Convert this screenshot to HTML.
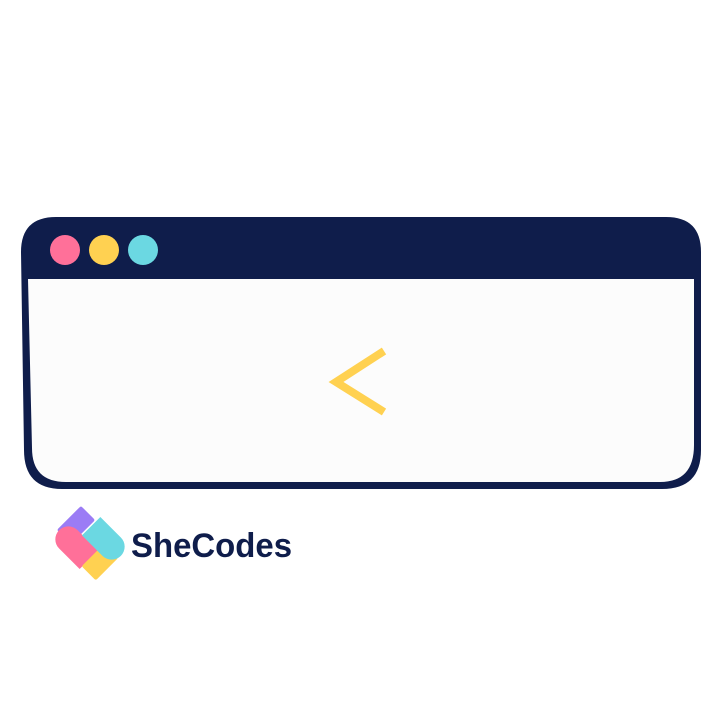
<!DOCTYPE html>
<html><head><style>
body{margin:0;width:720px;height:720px;background:#fff;overflow:hidden;position:relative;font-family:"Liberation Sans",sans-serif}
</style></head><body>
<svg width="720" height="720" style="position:absolute;left:0;top:0">
<path d="M56 217 L666 217 Q701 217 701 252 L701 450 Q701 489 662 489 L62 489 Q24 489 24 450 L21 252 Q21 217 56 217 Z" fill="#0f1d4b"/>
<path d="M28 279 L694 279 L694 445 Q694 482 660 482 L66 482 Q32 482 32 448 Z" fill="#fcfcfc"/>
<circle cx="65" cy="250" r="15" fill="#ff7099"/>
<circle cx="104" cy="250" r="15" fill="#ffd151"/>
<circle cx="143" cy="250" r="15" fill="#6bd8e2"/>
<polyline points="384,351 336,382 384,412" fill="none" stroke="#ffd151" stroke-width="8"/>
<rect x="-17" y="-10" width="34" height="20" rx="2" fill="#9b7cf5" transform="translate(76 525) rotate(-45)"/>
<path d="M-8 -13 L21 -13 L21 13 L-8 13 A13 13 0 0 1 -8 -13 Z" fill="#ff7099" transform="translate(74 545) rotate(45)"/>
<rect x="-16" y="-10" width="32" height="20" rx="2" fill="#ffd151" transform="translate(100 562) rotate(-45)"/>
<path d="M-21 -13 L8 -13 A13 13 0 0 1 8 13 L-21 13 Z" fill="#6bd8e2" transform="translate(106 541) rotate(45)"/>
<text x="131" y="557" font-family="Liberation Sans" font-weight="bold" font-size="34" fill="#0f1d4b" textLength="161" lengthAdjust="spacingAndGlyphs">SheCodes</text>
</svg>
</body></html>
